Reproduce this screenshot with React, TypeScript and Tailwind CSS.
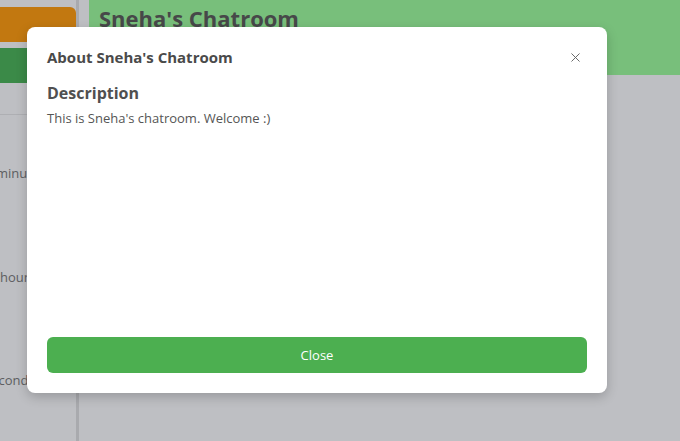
import { X } from 'lucide-react';

const font = { fontFamily: '"Open Sans", "Noto Sans", sans-serif' };

function Sidebar() {
  return (
    <div className="w-[79px] shrink-0 h-full border-r-[3px] border-[#a9aaae] flex flex-col overflow-hidden">
      <div className="mt-[7px] h-[35px] bg-[#c27810] rounded-tr-[6px]" />
      <div className="mt-[6px] h-[35px] bg-[#3b8a48]" />
      <div className="mt-[31px] border-t border-[#aeafb3]" />
      <div className="flex flex-col text-[13px] text-[#5d5e61] whitespace-nowrap">
        <div className="mt-[49px] -ml-[4px]">minutes</div>
        <div className="mt-[84px]">hours</div>
        <div className="mt-[84px] -ml-[15px]">seconds</div>
      </div>
    </div>
  );
}

function ChatHeader() {
  return (
    <div className="h-[75px] bg-[#78bf7b] pl-[10px] pt-[4px]">
      <h1 className="text-[22px] font-bold text-[#474849] leading-[28px]">Sneha's Chatroom</h1>
    </div>
  );
}

function AboutModal() {
  return (
    <div className="absolute left-[27px] top-[27px] w-[580px] h-[366px] bg-white rounded-[8px] shadow-[0_4px_12px_rgba(0,0,0,0.2)] flex flex-col px-[20px] pt-[19px] pb-[20px]">
      <div className="flex items-center justify-between h-[22px]">
        <h2 className="text-[15px] font-bold text-[#4a4a4a]">About Sneha's Chatroom</h2>
        <button className="text-[#606060] mr-[4px]">
          <X size={15} strokeWidth={1.5} />
        </button>
      </div>
      <h3 className="mt-[14px] text-[16px] font-bold text-[#505050] leading-[22px]">Description</h3>
      <p className="mt-[5px] text-[13px] text-[#555555] leading-[18px]">This is Sneha's chatroom. Welcome :)</p>
      <div className="flex-1" />
      <button className="h-[36px] w-full bg-[#4caf50] rounded-[6px] text-white text-[13px] pt-[1px]">Close</button>
    </div>
  );
}

export default function App() {
  return (
    <div className="relative w-[680px] h-[441px] overflow-hidden bg-[#bebfc3]" style={font}>
      <div className="flex h-full">
        <Sidebar />
        <div className="flex-1 pl-[10px] flex flex-col">
          <ChatHeader />
        </div>
      </div>
      <AboutModal />
    </div>
  );
}
